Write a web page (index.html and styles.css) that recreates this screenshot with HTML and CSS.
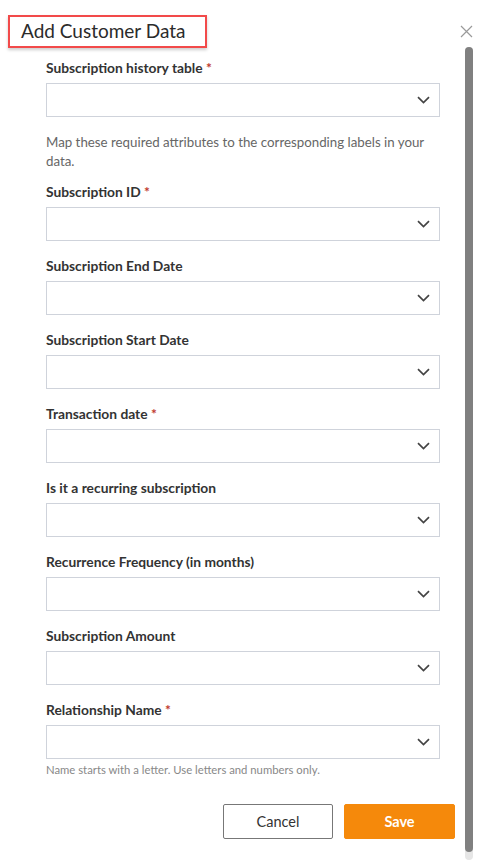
FILE: index.html
```html
<!DOCTYPE html>
<html>
<head>
<meta charset="utf-8">
<link rel="stylesheet" href="styles.css">
</head>
<body>
<div class="dialog">
  <div class="header">
    <h1 class="title">Add Customer Data</h1>
    <button class="close" aria-label="Close">
      <svg width="13" height="13" viewBox="0 0 13 13"><path d="M1 1L12 12M12 1L1 12" stroke="#9a9a9a" stroke-width="1.2" fill="none"/></svg>
    </button>
  </div>
  <form class="form">
    <div class="field">
      <label class="label">Subscription history table <span class="req">*</span></label>
      <div class="select"><svg class="chev" width="13" height="8" viewBox="0 0 13 8"><path d="M1 1.2L6.5 6.5L12 1.2" stroke="#444" stroke-width="1.7" fill="none"/></svg></div>
    </div>
    <p class="desc">Map these required attributes to the corresponding labels in your data.</p>
    <div class="field">
      <label class="label">Subscription ID <span class="req">*</span></label>
      <div class="select"><svg class="chev" width="13" height="8" viewBox="0 0 13 8"><path d="M1 1.2L6.5 6.5L12 1.2" stroke="#444" stroke-width="1.7" fill="none"/></svg></div>
    </div>
    <div class="field">
      <label class="label">Subscription End Date</label>
      <div class="select"><svg class="chev" width="13" height="8" viewBox="0 0 13 8"><path d="M1 1.2L6.5 6.5L12 1.2" stroke="#444" stroke-width="1.7" fill="none"/></svg></div>
    </div>
    <div class="field">
      <label class="label">Subscription Start Date</label>
      <div class="select"><svg class="chev" width="13" height="8" viewBox="0 0 13 8"><path d="M1 1.2L6.5 6.5L12 1.2" stroke="#444" stroke-width="1.7" fill="none"/></svg></div>
    </div>
    <div class="field">
      <label class="label">Transaction date <span class="req">*</span></label>
      <div class="select"><svg class="chev" width="13" height="8" viewBox="0 0 13 8"><path d="M1 1.2L6.5 6.5L12 1.2" stroke="#444" stroke-width="1.7" fill="none"/></svg></div>
    </div>
    <div class="field">
      <label class="label">Is it a recurring subscription</label>
      <div class="select"><svg class="chev" width="13" height="8" viewBox="0 0 13 8"><path d="M1 1.2L6.5 6.5L12 1.2" stroke="#444" stroke-width="1.7" fill="none"/></svg></div>
    </div>
    <div class="field">
      <label class="label">Recurrence Frequency (in months)</label>
      <div class="select"><svg class="chev" width="13" height="8" viewBox="0 0 13 8"><path d="M1 1.2L6.5 6.5L12 1.2" stroke="#444" stroke-width="1.7" fill="none"/></svg></div>
    </div>
    <div class="field">
      <label class="label">Subscription Amount</label>
      <div class="select"><svg class="chev" width="13" height="8" viewBox="0 0 13 8"><path d="M1 1.2L6.5 6.5L12 1.2" stroke="#444" stroke-width="1.7" fill="none"/></svg></div>
    </div>
    <div class="field last">
      <label class="label">Relationship Name <span class="req">*</span></label>
      <div class="select"><svg class="chev" width="13" height="8" viewBox="0 0 13 8"><path d="M1 1.2L6.5 6.5L12 1.2" stroke="#444" stroke-width="1.7" fill="none"/></svg></div>
      <p class="help">Name starts with a letter. Use letters and numbers only.</p>
    </div>
    <div class="actions">
      <button type="button" class="btn cancel">Cancel</button>
      <button type="button" class="btn save">Save</button>
    </div>
  </form>
  <div class="scrollbar"><div class="thumb"></div></div>
</div>
</body>
</html>
```

FILE: styles.css
```css
* { box-sizing: border-box; }
html, body { margin: 0; padding: 0; background: #fff; }
body {
  font-family: Lato, "Noto Sans", sans-serif;
  color: #333;
  width: 481px;
  height: 863px;
  overflow: hidden;
}
.dialog {
  position: relative;
  height: 863px;
}
.header {
  display: flex;
  justify-content: space-between;
  align-items: flex-start;
  padding: 15px 8px 0 8px;
}
.title {
  margin: 0;
  width: 199px;
  height: 33px;
  border: 2px solid #f24a4a;
  box-shadow: 0 2px 3px rgba(0,0,0,0.2);
  font-weight: 400;
  font-size: 19px;
  line-height: 28px;
  padding-left: 11px;
  color: #2b2b2b;
}
.close {
  border: 0;
  background: none;
  padding: 0;
  margin: 10px 0 0 0;
  width: 13px;
  height: 13px;
  display: block;
}
.close svg { display: block; }
.form {
  margin: 11px 0 0 46px;
  width: 394px;
}
.field { margin-bottom: 16px; }
.label {
  display: block;
  font-weight: 700;
  font-size: 13.8px;
  line-height: 18px;
  margin-bottom: 6px;
  color: #333;
}
.req { color: #c0392b; }
.select {
  height: 34px;
  border: 1px solid #cfd3db;
  display: flex;
  align-items: center;
  justify-content: flex-end;
  padding-right: 9px;
}
.chev { display: block; }
.desc {
  margin: 0 0 12px 0;
  font-size: 13.3px;
  line-height: 19px;
  color: #666;
}
.help {
  margin: 4px 0 0 0;
  font-size: 11.3px;
  line-height: 14px;
  color: #888;
}
.field.last { margin-bottom: 27px; }
.actions {
  display: flex;
  justify-content: flex-end;
  gap: 11px;
  margin-right: -15px;
}
.btn {
  height: 35px;
  font-family: Lato, "Noto Sans", sans-serif;
  font-size: 14.5px;
  border-radius: 2px;
  cursor: pointer;
}
.cancel {
  width: 110px;
  background: #fff;
  border: 1px solid #777;
  color: #333;
}
.save {
  width: 111px;
  background: #f5890b;
  border: 1px solid #f5890b;
  color: #fff;
  font-weight: 700;
}
.scrollbar {
  position: absolute;
  left: 465px;
  top: 47px;
  width: 8px;
  height: 813px;
  background: #e6e6e6;
  border-radius: 4px;
}
.thumb {
  height: 805px;
  background: #808080;
  border-radius: 4px;
}
```
